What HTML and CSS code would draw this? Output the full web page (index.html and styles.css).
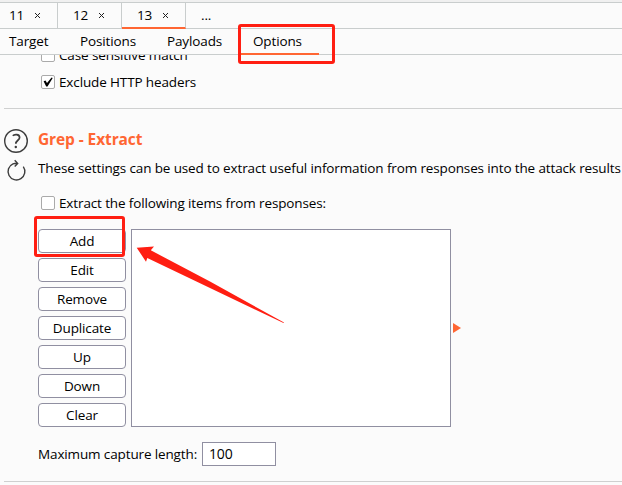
FILE: index.html
```html
<!DOCTYPE html>
<html lang="en">
<head>
<meta charset="utf-8">
<title>Options</title>
<link rel="stylesheet" href="styles.css">
</head>
<body>
<div class="app">
  <div class="tabs">
    <div class="tab t11"><span>11</span><svg class="x" viewBox="0 0 5 5"><path d="M0 0L5 5M5 0L0 5"/></svg></div>
    <div class="tab"><span>12</span><svg class="x" viewBox="0 0 5 5"><path d="M0 0L5 5M5 0L0 5"/></svg></div>
    <div class="tab active"><span>13</span><svg class="x" viewBox="0 0 5 5"><path d="M0 0L5 5M5 0L0 5"/></svg></div>
    <div class="tab more"><span>...</span></div>
  </div>
  <div class="nav">
    <div class="item target"><span>Target</span></div>
    <div class="item positions"><span>Positions</span></div>
    <div class="item payloads"><span>Payloads</span></div>
    <div class="item options"><span>Options</span></div>
  </div>
  <div class="match">
    <label class="check cut"><i class="box"></i><span class="case">Case sensitive match</span></label>
    <label class="check"><i class="box"><svg viewBox="0 0 14 14"><path d="M2.6 6.3L4.5 5.6L6 8.1L10.6 2.4L11.7 3.1L6.5 11.5H5.2Z"/></svg></i><span class="exclude">Exclude HTTP headers</span></label>
  </div>
  <div class="extract">
    <div class="side">
      <svg width="26" height="26" viewBox="0 0 26 26"><circle cx="13" cy="13" r="11.3"/><path d="M9.8 7.8C11 6.3 16.6 5.6 16.6 9.6C16.6 12.2 12.8 12.4 12.8 15.8" stroke-width="1.7"/><circle cx="12.8" cy="19" r="1.2" class="dot"/></svg>
      <svg width="26" height="26" viewBox="0 0 26 26"><path d="M20.3 9.7A8.4 8.4 0 1 1 10 6.9Q11.5 6.3 14 6.3M11.7 3.2L14.7 6.4L11.7 9.6"/></svg>
    </div>
    <div class="main">
      <h2><span>Grep - Extract</span></h2>
      <p><span class="desc">These settings can be used to extract useful information from responses into the attack results</span></p>
      <label class="check"><i class="box"></i><span class="following">Extract the following items from responses:</span></label>
      <div class="editor">
        <div class="buttons">
          <div class="btn"><span>Add</span></div>
          <div class="btn"><span>Edit</span></div>
          <div class="btn"><span>Remove</span></div>
          <div class="btn"><span>Duplicate</span></div>
          <div class="btn"><span>Up</span></div>
          <div class="btn"><span>Down</span></div>
          <div class="btn"><span>Clear</span></div>
        </div>
        <div class="list"></div>
        <i class="expand"></i>
      </div>
      <div class="length"><span class="max">Maximum capture length:</span><div class="field">100</div></div>
    </div>
  </div>
  <div class="mark mark-options"></div>
  <div class="mark mark-add"></div>
  <svg class="arrow" width="150" height="80" viewBox="0 0 150 80"><path d="M0.7 2.7L18 1.4L14.8 5.3L74 36.5L148 77.5L147.5 78L74 43L11.3 13L10 16.7Z"/></svg>
</div>
</body>
</html>
```
FILE: styles.css
```css
* { box-sizing: border-box; }
body { margin: 0; }
.app {
  position: relative; width: 622px; height: 485px; overflow: hidden;
  border-top: 2px solid #f0f0f0; background: #fbfbfb; color: #000;
  font: 13.5px/20px "Open Sans", "Noto Sans", sans-serif; letter-spacing: -0.13px; white-space: nowrap;
}
.tabs { display: flex; height: 27px; border-top: 1px solid #c9cdcd; border-bottom: 1px solid #c9cdcd; }
.tab {
  display: flex; align-items: center; justify-content: space-between; width: 64px; height: 26px;
  padding: 0 17px 1px 15px; border-right: 1px solid #c9cdcd; border-bottom: 1px solid #c9cdcd;
}
.t11 { width: 58px; padding-left: 9px; }
.tab.active { border-bottom: 2px solid #ff6633; padding-bottom: 0; }
.tab.more { width: 41px; border-right: 0; }
.x { width: 5px; height: 5px; overflow: visible; stroke: #222; stroke-width: 1; }
.nav { display: flex; height: 26px; border-bottom: 1px solid #c9cdcd; }
.item { height: 26px; padding-top: 2px; }
.target { width: 71px; padding-left: 9px; }
.positions { width: 87px; padding-left: 9px; }
.payloads { width: 81px; padding-left: 9px; }
.options { width: 80px; padding-left: 14px; border-bottom: 2px solid #ff6633; }
.match { height: 54px; margin-left: 4px; padding-left: 37px; border-bottom: 1px solid #cfd0d0; overflow: hidden; }
.check { display: flex; align-items: center; gap: 4px; height: 20px; }
.cut { margin-top: -10px; margin-bottom: 7px; }
.box { display: block; width: 14px; height: 14px; border: 1px solid #aaa; border-radius: 2px; background: #fff; }
.box svg { display: block; width: 14px; height: 14px; margin: -1px; }
.extract { display: flex; height: 373px; margin-left: 4px; border-bottom: 1px solid #cfd0d0; }
.side { width: 34px; padding-top: 19px; margin-left: -1px; }
.side svg { display: block; margin-bottom: 3px; fill: none; stroke: #3d3d3d; stroke-width: 1.4; }
.side .dot { fill: #3d3d3d; stroke: none; }
.main { margin-left: 1px; padding-top: 20px; }
h2 { height: 20px; margin: 0; color: #ff6633; font-size: 15.5px; line-height: 20px; letter-spacing: -0.1px; }
p { height: 20px; margin: 9px 0 15px; }
.main .check { margin-left: 3px; }
.editor { display: flex; margin-top: 16px; height: 199px; }
.buttons { display: flex; flex-direction: column; gap: 5px; width: 88px; }
.btn { height: 24px; border: 1px solid #908fa1; border-radius: 4px; background: #fff; text-align: center; line-height: 22px; }
.list { width: 320px; height: 198px; margin-left: 5px; border: 1px solid #908fa1; background: #fff; }
.expand { width: 8px; height: 10px; margin: 94px 0 0 2px; background: #ff6633; clip-path: polygon(0 0, 100% 50%, 0 100%); }
.length { display: flex; align-items: center; justify-content: space-between; width: 238px; height: 24px; margin-top: 14px; }
.field { width: 74px; height: 24px; padding-left: 6px; border: 1px solid #908fa1; background: #fff; font-size: 14px; line-height: 22px; }
.mark { position: absolute; border: 3px solid #ff1e12; border-radius: 3px; }
.mark-options { left: 238px; top: 22px; width: 97px; height: 40px; }
.mark-add { left: 34px; top: 214px; width: 91px; height: 41px; }
.arrow { position: absolute; left: 136px; top: 243px; fill: #ff1e12; }
```
